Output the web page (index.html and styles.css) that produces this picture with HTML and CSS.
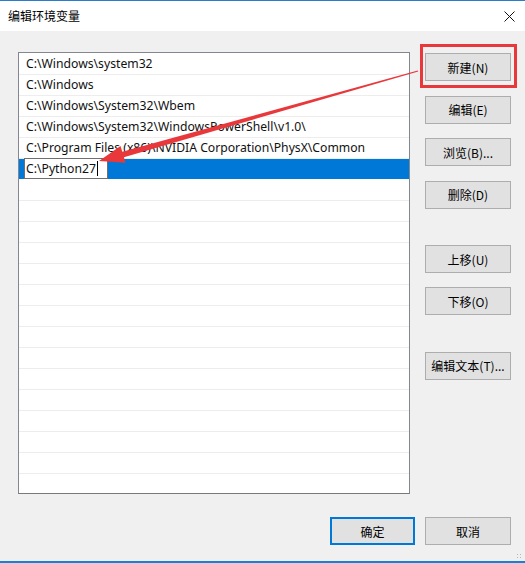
FILE: index.html
```html
<!DOCTYPE html>
<html lang="zh-CN">
<head>
<meta charset="utf-8">
<title>编辑环境变量</title>
<link rel="stylesheet" href="styles.css">
</head>
<body>
<div class="window">
  <div class="titlebar">
    <span class="title">编辑环境变量</span>
    <svg class="close" width="11" height="11" viewBox="0 0 11 11"><path d="M0.5 0.5 L10.5 10.5 M10.5 0.5 L0.5 10.5" stroke="#111" stroke-width="1" fill="none"/></svg>
  </div>
  <div class="body">
    <div class="main">
      <div class="list">
        <div class="row">C:\Windows\system32</div>
        <div class="row">C:\Windows</div>
        <div class="row">C:\Windows\System32\Wbem</div>
        <div class="row">C:\Windows\System32\WindowsPowerShell\v1.0\</div>
        <div class="row">C:\Program Files (x86)\NVIDIA Corporation\PhysX\Common</div>
        <div class="row selected"><span class="editbox">C:\Python27<span class="caret"></span></span></div>
        <div class="row"></div><div class="row"></div><div class="row"></div><div class="row"></div>
        <div class="row"></div><div class="row"></div><div class="row"></div><div class="row"></div>
        <div class="row"></div><div class="row"></div><div class="row"></div><div class="row"></div>
        <div class="row"></div><div class="row"></div>
      </div>
      <div class="side">
        <button class="btn b-new">新建(N)</button>
        <button class="btn b-edit">编辑(E)</button>
        <button class="btn b-browse">浏览(B)...</button>
        <button class="btn b-del">删除(D)</button>
        <button class="btn b-up">上移(U)</button>
        <button class="btn b-down">下移(O)</button>
        <button class="btn b-text">编辑文本(T)...</button>
      </div>
    </div>
    <div class="footer">
      <button class="btn ok">确定</button>
      <button class="btn">取消</button>
    </div>
    <div class="grip"></div>
  </div>
  <div class="highlight"></div>
  <svg class="arrow" width="525" height="563" viewBox="0 0 525 563">
    <polygon fill="#e8383b" points="99,161 125.5,162.8 123.9,157.2 418.2,71.6 417.8,70.4 122.3,151.8 120.5,146"/>
  </svg>
</div>
</body>
</html>
```

FILE: styles.css
```css
* { box-sizing: border-box; }
html, body { margin: 0; padding: 0; }
body {
  width: 525px;
  height: 563px;
  overflow: hidden;
  background: #f0f0f0;
  font-family: "Noto Sans", "Noto Sans CJK SC", sans-serif;
  font-size: 12px;
  color: #000;
}
.window {
  position: relative;
  width: 525px;
  height: 563px;
  display: flex;
  flex-direction: column;
  border-top: 1px solid #2b7ccb;
  border-bottom: 2px solid #1b7fd6;
}
.titlebar {
  height: 30px;
  background: #fff;
  display: flex;
  align-items: center;
  justify-content: space-between;
  padding: 0 10px 0 8px;
  flex: none;
}
.title {
  font-family: "Noto Sans CJK SC", sans-serif;
  font-size: 12px;
  line-height: 1;
  margin-top: 0px;
}
.close { display: block; margin-right: 0; }
.body {
  flex: 1;
  position: relative;
  display: flex;
  flex-direction: column;
}
.main {
  display: flex;
  padding: 21px 0 0 18px;
}
.list {
  width: 392px;
  height: 442px;
  background: #fff;
  border: 1px solid #828790;
  border-bottom-color: #7a7a7a;
  padding-top: 1px;
  overflow: hidden;
}
.row {
  height: 21px;
  border-bottom: 1px solid #ededed;
  padding-left: 7px;
  line-height: 20px;
  white-space: nowrap;
  font-family: "Noto Sans", sans-serif;
  font-size: 12.2px;
  color: #111;
}
.row.selected {
  background: #0078d7;
  padding-left: 5px;
  border-bottom-color: #fff;
  height: 21px;
}
.editbox {
  display: inline-block;
  width: 84px;
  height: 21px;
  margin-top: -1px;
  background: #fff;
  border: 1px solid #6f6f6f;
  padding-left: 1px;
  line-height: 19px;
  vertical-align: top;
}
.caret {
  display: inline-block;
  width: 1px;
  height: 15px;
  background: #000;
  vertical-align: -3px;
  margin-left: 1px;
}
.side {
  display: flex;
  flex-direction: column;
  margin-left: 15px;
  padding-top: 1px;
}
.btn {
  width: 86px;
  height: 28px;
  margin: 0;
  padding: 0;
  background: #e1e1e1;
  border: 1px solid #adadad;
  font-family: "Noto Sans CJK SC", sans-serif;
  font-size: 12px;
  color: #000;
  display: flex;
  align-items: center;
  justify-content: center;
}
.b-edit { margin-top: 14.5px; }
.b-browse { margin-top: 14.5px; }
.b-del { margin-top: 14.5px; }
.b-up { margin-top: 36.5px; }
.b-down { margin-top: 14px; }
.b-text { margin-top: 36.5px; }
.footer {
  display: flex;
  justify-content: flex-end;
  gap: 10px;
  padding: 23px 14px 0 0;
}
.btn.ok {
  width: 85px;
  border: 2px solid #0078d7;
}
.grip {
  position: absolute;
  right: 3px;
  bottom: 2px;
  width: 6px;
  height: 6px;
  background-image: radial-gradient(circle, #b8b8b8 0.9px, transparent 1px);
  background-size: 3px 3px;
}
.highlight {
  position: absolute;
  left: 420px;
  top: 43px;
  width: 97px;
  height: 44px;
  border: 3px solid #e8383b;
}
.arrow {
  position: absolute;
  left: 0;
  top: -1px;
  pointer-events: none;
}
```
